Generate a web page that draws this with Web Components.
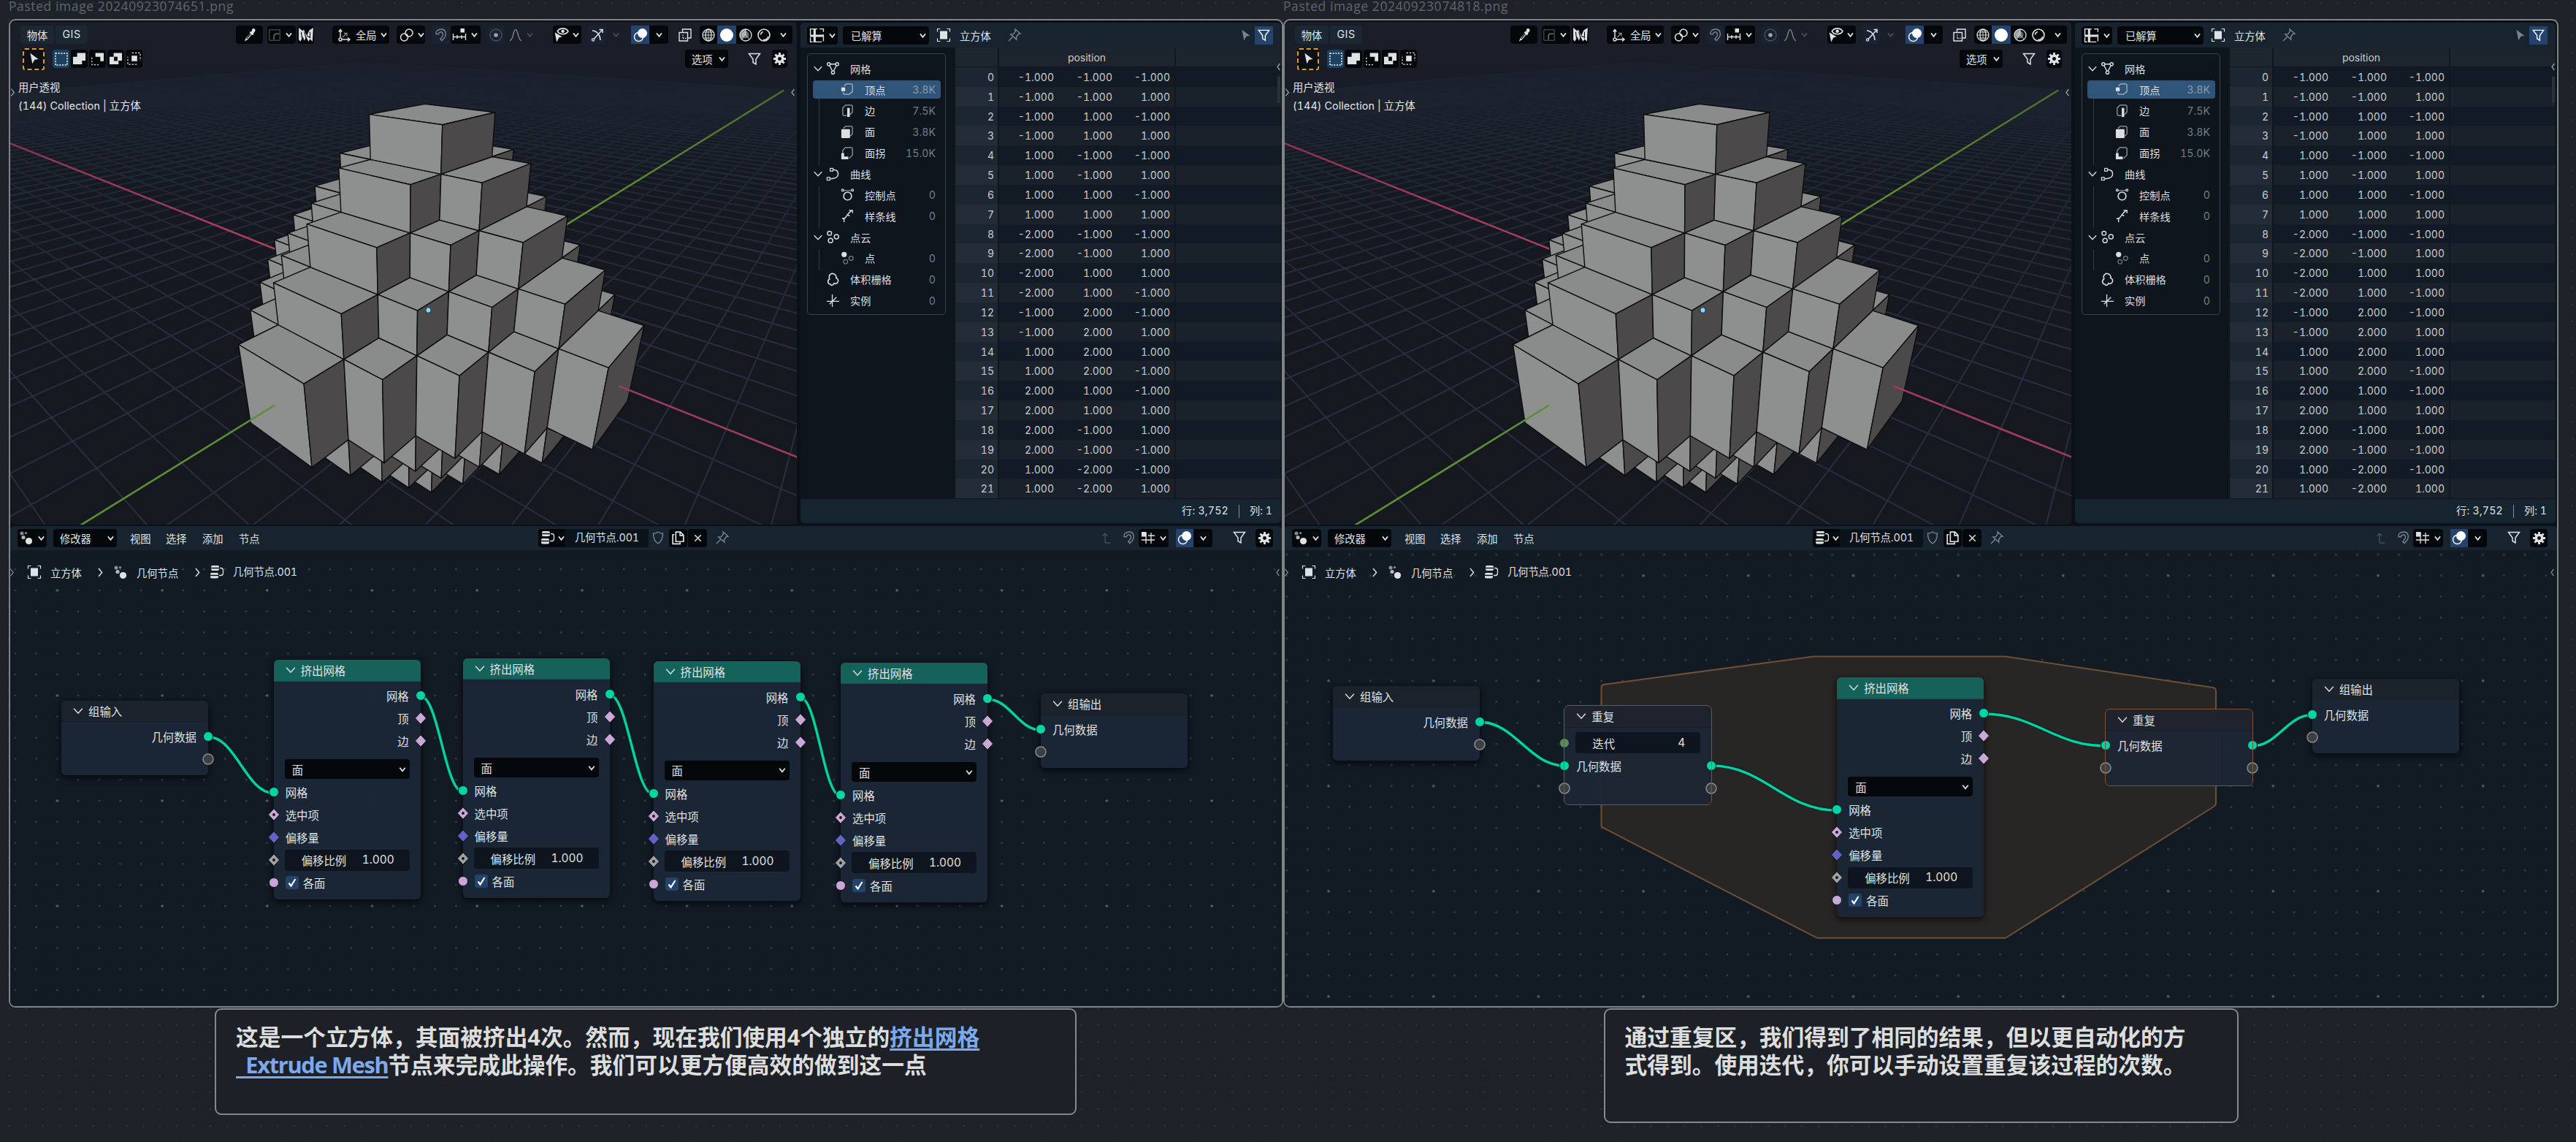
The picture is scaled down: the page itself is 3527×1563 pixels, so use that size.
<!DOCTYPE html>
<html lang="zh-CN">
<head>
<meta charset="utf-8">
<title>Canvas</title>
<style>
html,body{margin:0;padding:0}
body{width:3527px;height:1563px;overflow:hidden;background:#1e2227;font-family:Inter,"Noto Sans CJK SC",sans-serif;font-variant-numeric:tabular-nums}
</style>
</head>
<body>
<canvas-board></canvas-board>
<script>
const define = (name, render, after) => customElements.define(name, class extends HTMLElement {
  connectedCallback() {
    if (this.shadowRoot) return;
    const root = this.attachShadow({ mode: "open" });
    root.innerHTML = render(this);
    if (after) after(this, root);
  }
});
const at = (el, n, d = "") => el.getAttribute(n) ?? d;

/* ---------- text stretched to a given width through letter spacing ---------- */
define("fit-text", () => `<style>:host{display:inline-block;white-space:pre;line-height:1}span{display:inline-block}</style><span><slot></slot></span>`,
  (el, root) => {
    const s = root.querySelector("span"), w = +at(el, "w", 0);
    if (!w) return;
    const n = el.textContent.length, cur = s.getBoundingClientRect().width;
    el.style.letterSpacing = ((w - cur) / n).toFixed(3) + "px";
  });

/* ---------- icons, 20 x 20 ---------- */
const I = {
  chev: `<path d="M6.300 7.800l3.700 4.600L13.700 7.800" class="s" stroke-width="1.800"/>`,
  bigchev: `<path d="M3.500 6.500L10 13.500l6.500-7" class="s" stroke-width="1.600"/>`,
  right: `<path d="M7 3.500L12.500 10 7 16.500" class="s" stroke-width="1.700"/>`,
  left: `<path d="M12.500 4L8 10l4.500 6" class="s" stroke-width="1.700"/>`,
  dropper: `<path d="M13 2.500c2-2 5 .8 3.400 2.900l-2 2.500.6.8-1.500 1.500-1-.8-5.300 6.300-3.700 2 1.600-4 5.500-6-.8-.9 1.400-1.500 1 .6z" class="f"/><path d="M6 14.500l5-6" stroke="#05080b" stroke-width="1.200"/>`,
  orient: `<path d="M2 2h16v16H2z" class="s" stroke-width="1.100" opacity=".4"/><path d="M9 17v-5q0-4 4-4h4" class="s" stroke-width="1.800" opacity=".45"/>`,
  scribble: `<path d="M1 1l5 4 1-2 4 8 3-7 5-3-1 17-3-3-2 3-3-6-2 5-2-5-3 6-2-2z" class="f"/><path d="M4 6l1 8M8 6l2 8M15 6l0 8M11 11l4 2" stroke="#05080b" stroke-width="1" fill="none"/>`,
  axes: `<path d="M5 3v10M7 16h11M2.800 5.500L5 2.500l2.200 3M15 13.500l3 2.500-3 2.500" class="s" stroke-width="1.500"/><circle cx="5" cy="16" r="2" class="s" stroke-width="1.500"/><path d="M8 13l5-4.500M10 7.500h4v4" class="s" opacity=".6"/>`,
  pivot: `<circle cx="6.500" cy="13" r="5" class="s" stroke-width="1.500"/><circle cx="13" cy="7" r="5" class="s" stroke-width="1.500"/><circle cx="10" cy="10" r="1.500" class="f"/>`,
  magnet: `<path d="M3 8.500C2 1.500 13.500-.5 16 6c1.500 5-1.500 8.500-5 11.500l-2.200-2.200c2.700-2.500 4.500-5 3.500-7.500-1.200-3-6-2.500-5.800 1zM3 8.500l3.500.3" class="s" stroke-width="1.400"/>`,
  snap: `<path d="M1 12.500h18M1.500 8v9M7 10v5M13 10v5M18.500 8v9" class="s" stroke-width="1.400"/><rect x="11.500" y="1" width="5.500" height="5.500" class="f"/>`,
  snapgrid: `<path d="M7 3v15M14 3v15M1 13h18M10 7h9M1 7h4" class="s"/><rect x="1" y="2" width="6.500" height="6.500" class="f"/>`,
  prop: `<circle cx="10" cy="10" r="8" class="s" opacity=".5"/><circle cx="10" cy="10" r="2.800" fill="#9aa3ac"/>`,
  bell: `<path d="M2 17.500c5 0 4.500-15 8-15s3 15 8 15" class="s" stroke-width="1.400"/>`,
  eye: `<path d="M5 5.500c3-5 11-5 14 0-3 5-11 5-14 0z" class="s" stroke-width="1.500"/><circle cx="12" cy="5.500" r="2.200" class="f"/><path d="M1.500 7l9.500 5.500-4 1.200L4 19.500z" class="f"/>`,
  gizmo: `<path d="M3 4c6 0 11 6 11 13M5 15.500L17 2.500M12.500 2.500H17V7" class="s" stroke-width="1.500"/><circle cx="4" cy="16.500" r="1.600" class="s"/>`,
  overlay: `<circle cx="12.500" cy="7.500" r="6.500" class="f"/><circle cx="7.500" cy="12.500" r="6" class="o"/>`,
  xray: `<path d="M6.500 5.500V2h11.500v12h-4M2 6.500h11.500V18H2z" class="s" stroke-width="1.400"/><path d="M7 9.500v5M7 14.500h5" class="s" stroke-dasharray="1.500 1.500"/>`,
  wire: `<circle cx="10" cy="10" r="8" class="s"/><ellipse cx="10" cy="10" rx="4" ry="8" class="s"/><path d="M10 2v16M2 10h16M3.500 6h13M3.500 14h13" class="s" stroke-width=".9"/>`,
  solid: `<circle cx="10" cy="10" r="9" fill="#fff"/>`,
  mat: `<circle cx="10" cy="10" r="8" class="s"/><path d="M10 2a8 8 0 0 0-4.500 14.600L10 10z" class="f" opacity=".6"/><path d="M10 2v8l5.500 6" class="s" stroke-width="1"/><circle cx="9.500" cy="9.500" r="5" class="f" opacity=".45"/>`,
  rend: `<circle cx="10" cy="10" r="8" class="s" stroke-width="1.600"/><path d="M5.500 9.500a5 5 0 0 1 3.200-4M16 12a7 7 0 0 1-7 4.500" class="s" stroke-width="1.600"/>`,
  funnel: `<path d="M2.500 2.500h15l-5.500 7.500v7l-4-2.500V10z" class="s" stroke-width="1.500"/>`,
  gear: `<circle cx="10" cy="10" r="6.300" class="f"/><path d="M10 1v18M1 10h18M3.600 3.600l12.800 12.800M16.400 3.600L3.600 16.400" stroke="currentColor" stroke-width="3"/><circle cx="10" cy="10" r="2.600" fill="#05080b"/>`,
  tree: `<circle cx="4" cy="4" r="2.500" class="f" opacity=".6"/><circle cx="9.500" cy="3.500" r="1.600" class="f" opacity=".6"/><circle cx="6" cy="9.500" r="2.600" class="f" opacity=".8"/><circle cx="13.500" cy="14.500" r="4.600" class="f"/>`,
  group: `<rect x="2" y="1" width="11" height="7" rx="2" class="f"/><rect x="1" y="11" width="11" height="7.500" rx="2" class="f"/><path d="M2 4.500h11M1 14.500h11" stroke="#0a1016"/><path d="M14 4.500h1.500q3 0 3 3v4q0 3-3 3H13" class="s"/>`,
  obj: `<rect x="5" y="4.500" width="10" height="11" class="f"/><path d="M1.500 5.500v-4h4M14.500 1.500h4v4M18.500 14.500v4h-4M5.500 18.500h-4v-4" class="s" stroke-width="1.200"/>`,
  pin: `<path d="M11 2l7 6-2.500.5-3 4 .3 3.500-8-7 3.700-.4 3-4zM7.500 12.500L2 18" class="s" stroke-width="1.400"/>`,
  sheet: `<path d="M1.500 1.500h17v17h-17z" class="s" stroke-dasharray="9 3"/><path d="M7 1v18M1 10.500h17" class="s" stroke-width="3"/>`,
  cursor: `<path d="M4 1l13 9.500-6 1L7.500 18z" class="f"/>`,
  shield: `<path d="M10 2c2 1.500 4 2 6.500 2.200C16.500 11 15 15 10 18 5 15 3.500 11 3.500 4.200 6 4 8 3.500 10 2z" class="s" stroke-width="1.400"/>`,
  copy: `<path d="M7 2h6l4 4v8.500H7zM12.500 2v4.500H17M5 5.500H3v12h9.500v-2" class="s" stroke-width="1.600"/>`,
  x: `<path d="M5 5l10 10M15 5L5 15" class="s" stroke-width="1.700"/>`,
  up: `<path d="M9 17V4M5.500 8L9 4l3.500 4M9 17h7" class="s" stroke-width="1.400"/>`,
  mesh: `<path d="M4 4h12L10 15.500z" class="s" stroke-width="1.500"/><g class="k" stroke-width="1.500"><circle cx="4" cy="4" r="2.200"/><circle cx="16" cy="4" r="2.200"/><circle cx="10" cy="16" r="2.200"/></g>`,
  vert: `<path d="M4 14v1q0 2 2 2h6l5-4V4q0-2-2-2H8L5 5" class="s" opacity=".7"/><rect x="1" y="7" width="5.500" height="5.500" class="f"/>`,
  edge: `<path d="M9 17H5q-2 0-2-2V6l4-4h8q2 0 2 2v8l-4 4" class="s" opacity=".7"/><rect x="9.500" y="6" width="3.600" height="13" class="f"/>`,
  face: `<path d="M4 5l3-3h8q2 0 2 2v9l-3 3" class="s" opacity=".7"/><rect x="1" y="6" width="12.500" height="13" rx="1" class="f"/>`,
  corner: `<path d="M3 10V6l4-4h8q2 0 2 2v9l-4 4h-1" class="s" opacity=".7"/><path d="M1 10h4v5h6v4H1z" class="f"/>`,
  curve: `<path d="M10 3.500c6 0 7.500 3 7.500 6S15 16.500 6 16.500" class="s" stroke-width="1.600"/><rect x="6" y="1.500" width="4" height="4" class="k"/><rect x="1.500" y="14.500" width="4" height="4" class="k"/>`,
  cp: `<circle cx="10" cy="12" r="5.700" class="s" stroke-width="1.700"/><path d="M4 4h12" class="s" stroke-width=".8"/><circle cx="3" cy="3.500" r="1.500" class="s"/><circle cx="17" cy="3.500" r="1.500" class="s"/>`,
  spline: `<path d="M5 19c-1-7 1-5 3-8s2-4 8-9M12 2h5v4M2 14l5-1M9 8l4 2" class="s" stroke-width="1.500"/>`,
  cloud: `<circle cx="5" cy="4.500" r="3" class="s" stroke-width="1.500"/><circle cx="15" cy="9.500" r="3.200" class="s" stroke-width="1.500"/><circle cx="6.500" cy="15" r="3.200" class="s" stroke-width="1.500"/>`,
  pt: `<circle cx="5" cy="4.500" r="3.800" class="f"/><circle cx="15" cy="10" r="3" class="s" opacity=".5"/><circle cx="7" cy="15" r="3" class="s" opacity=".5"/>`,
  vol: `<path d="M5 9C3 4 7 1 10 1.500S15.500 5 14.500 8c3 1 4 4 2 6.500-1.500 2-4 2-5 1-1 3.500-5 3.500-5.500 1-3 .5-5-4-1-7.500z" class="s" stroke-width="1.700"/>`,
  inst: `<path d="M9 1v18M1 11h18M9 11l6-6M9 11l-4 4" class="s" stroke-width="1.400"/>`,
  s1: `<rect x="2" y="2" width="16" height="16" class="o" stroke-dasharray="2 1.700"/>`,
  s2: `<path d="M7 1.500h12v11h-5V18H1V7h6z" class="f"/>`,
  s3: `<path d="M7 1.500h12v12h-5V7H7z" class="f"/><path d="M2 8v10.500h9.500" class="s" stroke-dasharray="2.500 2"/>`,
  s4: `<path d="M7 1.500h12v11h-5V18H1V7h6z" class="f"/><rect x="7.500" y="7" width="5" height="6" fill="#05080b"/>`,
  s5: `<rect x="6.500" y="5.500" width="8" height="8" class="f"/><path d="M7 1.500h12v11M14 18H1V7" class="s" stroke-dasharray="2.500 2"/>`,
};
define("ui-icon", el => `<style>:host{display:inline-flex;flex:none;width:${at(el, "size", 20)}px;height:${at(el, "size", 20)}px}svg{width:100%;height:100%;overflow:visible}
.s{fill:none;stroke:currentColor}.o{fill:none;stroke:#fff;stroke-width:1.500}.k{fill:#0e151c;stroke:currentColor}.f{fill:currentColor}svg{stroke-width:1.300}</style><svg viewBox="0 0 20 20">${I[at(el, "name")]}</svg>`);

/* a strip of cells: [left, width, html, class] with left measured from the window's own left edge */
const strip = (x0, cells) => {
  let p = x0, out = "";
  for (const [x, w, html, c = ""] of cells) {
    out += `<div class="cell ${c}" style="margin-left:${(x - p).toFixed(1)}px;width:${w}px">${html}</div>`;
    p = x + w;
  }
  return out;
};
const ic = (n, s = 20) => `<ui-icon name="${n}" size="${s}"></ui-icon>`;
const stripCss = `.strip{display:flex;align-items:center;color:#dfe2e4;font-size:14.300px}
.cell{display:flex;flex:none;align-items:center;justify-content:center;height:25px;white-space:nowrap;box-sizing:border-box}
.b{background:#05080b;border-radius:4px}.bl{background:#05080b;border-radius:4px 0 0 4px}.br{background:#05080b;border-radius:0 4px 4px 0}.bm{background:#05080b}
.blue{background:#24436d;color:#fff}.t{justify-content:flex-start}.dim{color:#7c848b}.dimmer{color:#464f5a}.tab{background:#1b2833;border-radius:4px}.tab2{background:#1a2231;border-radius:4px}`;

/* ---------- perspective from known world/window point pairs ---------- */
const anchors = [
  [-1,1,5,581.5,142.3],[-1,-1,5,505.8,155.7],[1,1,5,677.6,153.3],[1,-1,5,606.1,171],[1,-1,4,604,238.7],
  [-1,-1,4,506.5,217.7],[1,-2,4,562.6,252.7],[-1,-2,4,464.4,230],[2,-1,4,660,250.3],[2,1,4,726.8,224.3],
  [1,-5,1,416,525.3],[-1,-5,1,327.6,473.3],[1,-5,-1,425.8,639.3],[-1,-5,-1,343.7,578.3],[2,-4,1,523.3,519.3],
  [3,-3,1,628.5,513.7],[4,-2,1,732.4,508.3],[5,-1,1,833.4,503.3],[5,1,1,880.4,446],[5,-1,-1,812.3,615],
  [3,-3,-1,623,626.7],[0,0,0,586.5,424.3],[5,0,0,849,529.3],[0,-5,0,375,555]
];
const solveCamera = pts => {
  const N = 11, A = Array.from({ length: N }, () => new Array(N + 1).fill(0));
  const add = (r, b) => { for (let i = 0; i < N; i++) { for (let j = 0; j < N; j++) A[i][j] += r[i] * r[j]; A[i][N] += r[i] * b; } };
  for (const [x, y, z, px, py] of pts) {
    const u = (px - 586) / 100, v = (py - 424) / 100;
    add([x, y, z, 1, 0, 0, 0, 0, -u * x, -u * y, -u * z], u);
    add([0, 0, 0, 0, x, y, z, 1, -v * x, -v * y, -v * z], v);
  }
  for (let i = 0; i < N; i++) {
    let p = i;
    for (let k = i; k < N; k++) if (Math.abs(A[k][i]) > Math.abs(A[p][i])) p = k;
    [A[i], A[p]] = [A[p], A[i]];
    for (let k = 0; k < N; k++) if (k !== i) {
      const f = A[k][i] / A[i][i];
      for (let j = i; j <= N; j++) A[k][j] -= f * A[i][j];
    }
  }
  return A.map((r, i) => r[N] / r[i]);
};
const M = solveCamera(anchors);
const depth = (x, y, z) => M[8] * x + M[9] * y + M[10] * z + 1;
const proj = (x, y, z) => {
  const w = depth(x, y, z);
  return [(586 + 100 * (M[0] * x + M[1] * y + M[2] * z + M[3]) / w).toFixed(1), (424 + 100 * (M[4] * x + M[5] * y + M[6] * z + M[7]) / w).toFixed(1)];
};
const seg = (a, b) => {
  const e = .04; let wa = depth(...a), wb = depth(...b);
  if (wa < e && wb < e) return "";
  const mix = t => a.map((v, i) => v + (b[i] - v) * t);
  if (wa < e) a = mix((e - wa) / (wb - wa)); else if (wb < e) b = mix((e - wa) / (wb - wa));
  return `M${proj(...a)}L${proj(...b)}`;
};
const scene = (() => {
  let near = "", far = "";
  for (let i = -60; i <= 60; i++) {
    const d = seg([i, -60, 0], [i, 60, 0]) + seg([-60, i, 0], [60, i, 0]);
    if (i % 10 === 0) far += d; else near += d;
  }
  const lo = i => i > 0 ? i : i < 0 ? i - 1 : -1, hi = i => i > 0 ? i + 1 : i < 0 ? i : 1;
  const inside = (i, j, k) => Math.abs(i) + Math.abs(j) + Math.abs(k) <= 4;
  let f = "";
  const quad = (c, p) => { f += `<polygon fill="${c}" points="${p.map(q => proj(...q).join()).join(" ")}"/>`; };
  for (let k = -4; k <= 4; k++) for (let i = -4; i <= 4; i++) for (let j = 4; j >= -4; j--) {
    if (!inside(i, j, k)) continue;
    const [x0, x1, y0, y1, z0, z1] = [lo(i), hi(i), lo(j), hi(j), lo(k), hi(k)];
    if (!inside(i, j, k + 1)) quad("#8a8c8c", [[x0, y0, z1], [x1, y0, z1], [x1, y1, z1], [x0, y1, z1]]);
    if (!inside(i, j - 1, k)) quad("#8e908f", [[x0, y0, z0], [x1, y0, z0], [x1, y0, z1], [x0, y0, z1]]);
    if (!inside(i + 1, j, k)) quad("#4b494a", [[x1, y0, z0], [x1, y1, z0], [x1, y1, z1], [x1, y0, z1]]);
  }
  return `<path d="${near}" fill="none" stroke="#252d3e" stroke-width="2.200"/><path d="${far}" fill="none" stroke="#2a3245" stroke-width="2.400"/>
  <rect x="14" y="28" width="1080" height="420" fill="url(#fog)"/>
  <path d="${seg([-60,0,0],[0,0,0])}" stroke="url(#rx)" stroke-width="2.400"/><path d="${seg([0,60,0],[0,0,0])}" stroke="url(#gy)" stroke-width="2.400"/>
  <g stroke="#0c0c0d" stroke-width="1.400" stroke-linejoin="round">${f}</g>
  <path d="${seg([5,0,0],[30,0,0])}" stroke="#a23a5c" stroke-width="2.600"/><path d="${seg([0,-5,0],[0,-30,0])}" stroke="#5c8f31" stroke-width="2.600"/>
  <ellipse cx="586.5" cy="424.5" rx="3.600" ry="3.800" fill="#8fd4fb" stroke="#16364c"/>`;
})();

define("view-3d", () => `<style>
:host{display:grid;width:1077px;height:688px;background:#15181f;border-radius:5px;overflow:hidden;color:#e3e5e7}
:host>*{grid-area:1/1}${stripCss}
.ui{display:flex;flex-direction:column;align-items:stretch}
.bar1{height:35px}.bar2{height:31px}
.txt{display:flex;flex-direction:column;gap:9px;padding:16px 0 0 11px;font-size:14.300px;line-height:16px;height:41px}.txt fit-text{line-height:16px}
.ends{display:flex;justify-content:space-between;height:20px;margin:-34px -2px 0 -4px;color:#9aa0a5}
.tool{border:2px dashed #e19a2c;border-radius:3px;height:30px;background:#0c0f13}.on{background:#1d4161}
</style>
<svg width="1077" height="688" viewBox="14 30 1077 688"><defs>
<linearGradient id="fog" x1="0" y1="0" x2="0" y2="1"><stop offset="0" stop-color="#191e29"/><stop offset=".15" stop-color="#191e29" stop-opacity=".9"/><stop offset=".5" stop-color="#171b24" stop-opacity=".4"/><stop offset="1" stop-color="#15181f" stop-opacity="0"/></linearGradient>
<linearGradient id="rx" gradientUnits="userSpaceOnUse" x1="14" y1="0" x2="400" y2="0"><stop offset="0" stop-color="#8f3553"/><stop offset="1" stop-color="#b23e63"/></linearGradient>
<linearGradient id="gy" gradientUnits="userSpaceOnUse" x1="777" y1="0" x2="1091" y2="0"><stop offset="0" stop-color="#64972e"/><stop offset="1" stop-color="#4d6c2c"/></linearGradient></defs>${scene}</svg>
<div class="ui"><div class="strip bar1">${strip(14, [
  [28, 46, "物体", "tab"], [76, 44, `<fit-text w="25">GIS</fit-text>`, "tab"],
  [323, 37, ic("dropper", 22), "b"], [366, 20, ic("orient", 18), "bl"], [386, 19, ic("chev", 19), "br"], [407, 23, ic("scribble", 22), "b"],
  [455, 32, ic("axes"), "bl"], [487, 30, "全局", "bm t"], [517, 16, ic("chev", 19), "br"],
  [543, 27, ic("pivot"), "bl"], [570, 12, ic("chev", 19), "br"],
  [591, 25, ic("magnet"), "tab2 dim"], [617, 24, ic("snap"), "bl"], [641, 17, ic("chev", 19), "br"],
  [667, 24, ic("prop"), "tab2 dim"], [694, 24, ic("bell"), "dim"], [718, 15, ic("chev", 19), "dimmer"],
  [757, 23, ic("eye", 21), "bl"], [780, 16, ic("chev", 19), "br"],
  [805, 25, ic("gizmo"), "tab2"], [834, 18, ic("chev", 19), "dimmer"],
  [864, 25, ic("overlay"), "blue"], [889, 26, ic("chev", 19), "br"],
  [926, 23, ic("xray"), ""], [958, 24, ic("wire"), "bl"], [982, 26, ic("solid"), "bm blue"], [1008, 25, ic("mat"), "bm"], [1033, 26, ic("rend"), "bm"], [1059, 26, ic("chev", 19), "br"]
])}</div><div class="strip bar2">${strip(14, [
  [31, 30, ic("cursor", 17), "tool"], [72, 23, ic("s1"), "b on"], [97, 23, ic("s2", 19), "b"], [122, 23, ic("s3", 19), "b"], [147, 23, ic("s4", 19), "b"], [172, 23, ic("s5", 19), "b"],
  [938, 9, "", "bl"], [947, 33, "选项", "bm t"], [980, 17, ic("chev", 19), "br"], [1022, 22, ic("funnel"), ""], [1057, 21, ic("gear", 19), "b"]
])}</div>
<div class="txt"><span>用户透视</span><fit-text w="168">(144) Collection | 立方体</fit-text></div>
<div class="ends">${ic("right", 15)}${ic("left", 15)}</div></div>`);

/* ---------- spreadsheet ---------- */
const rows = `-1 -1 -1|-1 -1 1|-1 1 -1|-1 1 1|1 -1 -1|1 -1 1|1 1 -1|1 1 1|-2 -1 -1|-2 -1 1|-2 1 1|-2 1 -1|-1 2 -1|-1 2 1|1 2 1|1 2 -1|2 1 -1|2 1 1|2 -1 1|2 -1 -1|1 -2 -1|1 -2 1`.split("|").map(r => r.split(" ").map(v => (+v).toFixed(3)));
define("tree-row", el => { const lvl = +at(el, "level", 0); return `<style>
:host{display:flex;align-items:center;height:24.500px;margin:0 6px 4.370px;border-radius:4px;font-size:14.200px;color:#dcdfe1;padding:0 7px 0 0}
:host([on]){background:#30557a}
i{flex:none;width:${lvl ? 38 : 19}px;display:flex;box-sizing:border-box}b{flex:none;width:33px;display:flex}u{flex:1;text-decoration:none;white-space:nowrap}em{font-style:normal;color:#757d84}
:host([on]) em{color:#8a98a8}</style><i>${el.hasAttribute("open") ? ic("bigchev", 16) : ""}</i><b>${ic(at(el, "icon"), 19)}</b><u><slot></slot></u><em>${at(el, "count")}</em>`; });
define("sheet-view", () => `<style>
:host{display:flex;flex-direction:column;position:relative;width:658px;height:685px;background:#0e151c;border-radius:5px;overflow:hidden;color:#dfe2e4;font-size:14.200px}${stripCss}
.strip{height:34px;background:#17242f;flex:none}.main{display:flex;height:618px}
.side{width:212px;box-sizing:border-box;padding:8px 0 0 9px}
.box{width:190px;height:358px;border:1px solid #3b4248;border-radius:5px;padding-top:7.500px;box-sizing:border-box}
.kids{display:flex;flex-direction:column;border-left:1px solid #353b41;margin-left:15px}.kids tree-row{margin-left:-9px}
.grid{flex:1;display:flex;flex-direction:column;overflow:hidden}
.r{display:flex;height:26.840px;flex:none;line-height:27px;font-size:14px;background:#121b25;color:#c9cccf}
.r:nth-child(even){background:#1a212b}.r div{text-align:right}
.i{width:53px;padding-right:5px;background:#1c2630;border-right:2px solid #0e161e}.r:nth-child(even) .i{background:#232c36}
.a{width:75px}.c{width:80px}.d{width:79px;padding-right:6px;border-right:2px solid #0f1820}
.h{height:27px;background:#1d242e;color:#c9cccf;align-items:center;border-bottom:1px solid #0f161d;box-sizing:border-box}.h .i{background:#1d262f;height:26px}.h div.p{width:240px;height:27px;text-align:center;border-right:2px solid #0f1820}
.foot{height:33px;background:#16242f;display:flex;align-items:center;justify-content:flex-end;gap:14px;padding-right:12px;font-size:14.200px}
.foot i{width:1px;height:18px;background:#8a9298}
.scroll{position:absolute;right:1px;top:73px;width:4px;height:37px;border-radius:2px;background:#29313a}.fold{position:absolute;right:-4px;top:53px;color:#9aa0a5}
</style>
<div class="strip">${strip(1096, [[1105, 26, ic("sheet", 21), "bl"], [1131, 16, ic("chev", 19), "br"], [1154, 11, "", "bl"], [1165, 89, "已解算", "bm t"], [1254, 18, ic("chev", 19), "br"], [1282, 20, ic("obj"), ""], [1314, 44, "立方体", "t"], [1379, 20, ic("pin"), "dim"], [1696, 18, ic("cursor", 17), "dim"], [1718, 25, ic("funnel", 19), "blue"]])}</div>
<div class="main"><div class="side"><div class="box">
<tree-row icon="mesh" open>网格</tree-row><div class="kids"><tree-row level="1" icon="vert" count="3.8K" on>顶点</tree-row><tree-row level="1" icon="edge" count="7.5K">边</tree-row><tree-row level="1" icon="face" count="3.8K">面</tree-row><tree-row level="1" icon="corner" count="15.0K">面拐</tree-row></div>
<tree-row icon="curve" open>曲线</tree-row><div class="kids"><tree-row level="1" icon="cp" count="0">控制点</tree-row><tree-row level="1" icon="spline" count="0">样条线</tree-row></div>
<tree-row icon="cloud" open>点云</tree-row><div class="kids"><tree-row level="1" icon="pt" count="0">点</tree-row></div>
<tree-row icon="vol" count="0">体积栅格</tree-row><tree-row icon="inst" count="0">实例</tree-row></div></div>
<div class="grid"><div class="r h"><div class="i"></div><div class="p"><fit-text w="52">position</fit-text></div></div><div>${rows.map((r, i) => `<div class="r"><div class="i">${i}</div><div class="a">${r[0]}</div><div class="c">${r[1]}</div><div class="d">${r[2]}</div></div>`).join("")}</div></div></div>
<div class="foot"><fit-text w="64">行: 3,752</fit-text><i></i><fit-text w="31">列: 1</fit-text></div>
<div class="scroll"></div><div class="fold">${ic("left", 15)}</div>`);

/* ---------- node editor ---------- */
const sockets = {
  geo: `<circle cx="9" cy="9" r="6.500" fill="#00d6a3" stroke="#0b1a20" stroke-width="1"/>`,
  int: `<circle cx="9" cy="9" r="6.500" fill="#598c5c" stroke="#0b1a20" stroke-width="1"/>`,
  bool: `<circle cx="9" cy="9" r="6.500" fill="#cca6d6" stroke="#0b1a20" stroke-width="1"/>`,
  ext: `<circle cx="9" cy="9" r="7" fill="#3d3f41" stroke="#8b8d8e" stroke-width="1.500"/>`,
  bd: `<path d="M9 .8L16.600 9 9 17.200 1.400 9z" fill="#cca6d6" stroke="#0b1a20"/>`,
  bf: `<path d="M9 .8L16.600 9 9 17.200 1.400 9z" fill="#cca6d6" stroke="#0b1a20"/><circle cx="9" cy="9" r="1.900" fill="#111"/>`,
  vec: `<path d="M9 .8L16.600 9 9 17.200 1.400 9z" fill="#6363c7" stroke="#0b1a20"/>`,
  flt: `<path d="M9 .8L16.600 9 9 17.200 1.400 9z" fill="#a1a1a1" stroke="#0b1a20"/><circle cx="9" cy="9" r="1.900" fill="#111"/>`,
};
define("node-row", el => { const l = at(el, "in"), r = at(el, "out"); return `<style>
:host{display:flex;align-items:center;height:31.050px;font-size:15.400px;color:#dfe2e4;white-space:nowrap}
svg{flex:none;width:18px;height:18px;overflow:visible}.l{margin:0 7px 0 -9px}.r{margin:0 -9px 0 7px}.l0{width:16px}.r0{width:16px}
div{flex:1;display:flex;align-items:center;${r && !l ? "justify-content:flex-end" : ""}}</style>
${l ? `<svg class="l">${sockets[l]}</svg>` : `<span class="l0"></span>`}<div><slot></slot></div>${r ? `<svg class="r">${sockets[r]}</svg>` : `<span class="r0"></span>`}`; });
const field = `display:flex;align-items:center;flex:1;box-sizing:border-box;`;
const kinds = {
  extrude: `<node-row out="geo">网格</node-row><node-row out="bd">顶</node-row><node-row out="bd">边</node-row><p></p>
  <node-row><span class="drop">面${ic("chev", 20)}</span></node-row><node-row in="geo">网格</node-row><node-row in="bf">选中项</node-row><node-row in="vec">偏移量</node-row>
  <node-row in="flt"><span class="num">偏移比例<fit-text w="44">1.000</fit-text></span></node-row><node-row in="bool"><span class="chk"><svg width="18" height="18" viewBox="0 0 18 18"><path d="M4.500 9.500l3 4 6-9.500" fill="none" stroke="#fff" stroke-width="2.200"/></svg></span>各面</node-row>`,
  input: `<node-row out="geo">几何数据</node-row><node-row out="ext"></node-row>`,
  output: `<node-row in="geo">几何数据</node-row><node-row in="ext"></node-row>`,
  repeat: `<node-row in="int"><span class="num">迭代<span>4</span></span></node-row><node-row in="geo" out="geo">几何数据</node-row><node-row in="ext" out="ext"></node-row>`,
  repeatend: `<node-row in="geo" out="geo">几何数据</node-row><node-row in="ext" out="ext"></node-row>`,
};
define("geo-node", el => { const k = at(el, "kind"), rep = k.startsWith("repeat"); return `<style>
:host{display:block;position:absolute;left:${at(el, "x")}px;top:${at(el, "y")}px;width:201px;height:${at(el, "h")}px;background:${rep ? "#1d2635f2" : "#1b2636f7"};border-radius:6px;box-shadow:0 3px 9px 1px #0009;box-sizing:border-box;${rep ? "outline:1.500px solid #7a5638;outline-offset:0;box-shadow:none" : ""}}
header{display:flex;align-items:center;height:29.500px;box-sizing:border-box;padding-left:14px;gap:5px;border-radius:6px 6px 0 0;font-size:15.400px;color:#dfe2e4;background:${k === "extrude" ? "#15625b" : rep ? "#1f232d" : "#1c222c"};border-bottom:1px solid ${k === "extrude" ? "#1a4f50" : "#181e28"}}
section{padding-top:${k === "repeat" ? 5.5 : 4.3}px}p{margin:0;height:7.500px}
.drop{${field}height:27px;background:#04080b;border-radius:4px;justify-content:space-between;padding-left:10px;margin-left:-1px;margin-right:-1px}
.num{${field}height:29px;background:#0f151f;border-radius:4px;padding:0 21px 0 23px;justify-content:space-between;margin-left:-1px;margin-right:-1px}
.chk{display:flex;width:18px;height:18px;background:#23436b;border-radius:3px;margin-right:6px}
</style><header>${ic("bigchev", 18)}<slot></slot></header><section>${kinds[k]}</section>`; });

const graphs = {
  chain: {
    dots: [78.4, 808], nodes: [["input", 84, 959, 102, "组输入"], ["extrude", 374.7, 903.5, 328, "挤出网格"], ["extrude", 633.5, 901.3, 328, "挤出网格"], ["extrude", 894.5, 905, 328, "挤出网格"], ["extrude", 1151, 907.3, 328, "挤出网格"], ["output", 1425, 949.5, 102, "组输出"]],
    wires: [[285, 1008.5, 374.7, 1085.5], [576, 953, 633.5, 1083.3], [834.5, 951, 894.5, 1087], [1095.5, 954.5, 1151, 1089.3], [1352, 957, 1425, 999]], zone: ""
  },
  repeat: {
    dots: [74, 787.8], nodes: [["input", 80, 939, 102, "组输入"], ["repeat", 397.3, 966.5, 135, "重复"], ["extrude", 770.2, 927.5, 328, "挤出网格"], ["repeatend", 1138, 971, 104, "重复"], ["output", 1420.7, 929, 102, "组输出"]],
    wires: [[281, 988.3, 397.3, 1048], [598.3, 1048, 770.2, 1109.3], [971.2, 977, 1138, 1021], [1339, 1021, 1420.7, 978.5]],
    zone: `<path d="M447.500 941q0-3.500 3-4L738 898.500H1001L1285 941q4 1 4 5V1099q0 3-3 5L1001 1283.800H743L450 1133q-2.500-1.500-2.500-4z" fill="#282624" stroke="#6f4f35" stroke-width="2"/>`
  }
};
const wire = ([a, b, c, d]) => { const h = (c - a) * .42; return `<path d="M${a} ${b}C${a + h} ${b} ${c - h} ${d} ${c} ${d}"/>`; };
define("node-canvas", el => { const g = graphs[at(el, "graph")], [dx, dy] = g.dots; return `<style>
:host{display:block;position:relative;height:624px;background:#121a24;overflow:hidden;color:#dfe2e4}
.free{position:absolute;left:-14px;top:-753px;width:1760px;height:1380px}svg{position:absolute;left:0;top:0}
.crumb{position:relative;z-index:2;margin-top:18px}${stripCss}
</style><div class="free"><svg width="1760" height="1380"><defs>
<pattern id="d" patternUnits="userSpaceOnUse" width="28.740" height="28.800" x="${dx - 14}" y="${dy - 14}"><circle cx="14" cy="14" r="1.400" fill="#373f47"/></pattern>
<pattern id="e" patternUnits="userSpaceOnUse" width="143.700" height="144" x="${dx - 14}" y="${dy - 14}"><circle cx="14" cy="14" r="1.800" fill="#555d65"/></pattern></defs>
<rect width="1760" height="1380" fill="url(#d)"/><rect width="1760" height="1380" fill="url(#e)"/>${g.zone}
<g fill="none" stroke="#0a1f22" stroke-width="5.500">${g.wires.map(wire).join("")}</g><g fill="none" stroke="#00d2a0" stroke-width="3.500">${g.wires.map(wire).join("")}</g></svg>
${g.nodes.map(([k, x, y, h, t]) => `<geo-node kind="${k}" x="${x}" y="${y}" h="${h}">${t}</geo-node>`).join("")}</div>
<div class="strip crumb">${strip(14, [[10, 12, ic("right", 15), "dim"], [37, 19, ic("obj", 20), ""], [69, 44, "立方体", "t"], [128, 18, ic("right", 17), ""], [155, 19, ic("tree"), ""], [187, 58, "几何节点", "t"], [261, 18, ic("right", 17), ""], [287, 20, ic("group"), ""], [319, 90, `<fit-text w="88">几何节点.001</fit-text>`, "t"], [1743, 12, ic("left", 15), "dim"]])}</div>`; });

define("node-editor", el => `<style>:host{display:flex;flex-direction:column;flex:1}${stripCss}.bar{height:32.500px;background:#17242f;border-radius:5px 5px 0 0}.name{background:#0b131a}</style>
<div class="strip bar">${strip(14, [
  [24, 24, ic("tree"), "bl"], [48, 16, ic("chev", 19), "br"], [73, 9, "", "bl"], [82, 61, "修改器", "bm t"], [143, 17, ic("chev", 19), "br"],
  [178, 30, "视图", "t"], [227, 30, "选择", "t"], [277, 30, "添加", "t"], [327, 30, "节点", "t"],
  [737, 26, ic("group"), "bl"], [763, 11, ic("chev", 19), "bm"], [774, 114, `<fit-text w="88">几何节点.001</fit-text>`, "name"], [891, 20, ic("shield"), "dim"], [916, 25, ic("copy", 21), "b"], [942, 26, ic("x", 17), "b"], [979, 20, ic("pin"), "dim"],
  [1504, 20, ic("up"), "dimmer"], [1536, 20, ic("magnet"), "dim"], [1559, 26, ic("snapgrid"), "bl"], [1585, 15, ic("chev", 19), "br"], [1610, 24, ic("overlay"), "blue"], [1634, 26, ic("chev", 19), "br"], [1687, 20, ic("funnel"), ""], [1719, 24, ic("gear", 19), "b"]
])}</div><node-canvas graph="${at(el, "graph")}"></node-canvas>`);

define("blender-shot", el => `<style>
:host{display:flex;flex-direction:column;flex:none;width:${at(el, "w")}px;height:1353px;box-sizing:border-box;border:2px solid #7f8487;border-radius:9px;overflow:hidden;background:#0b1117}
.top{display:flex;gap:5px;height:692px;padding-top:2px;box-sizing:border-box;flex:none}sheet-view{margin-top:1px}
footer{height:4px;background:#22282e;flex:none}</style>
<div class="top"><view-3d></view-3d><sheet-view></sheet-view></div><node-editor graph="${at(el, "graph")}"></node-editor><footer></footer>`);

define("note-card", el => `<style>:host{display:block;flex:none;width:${at(el, "w")}px;height:${at(el, "h")}px;box-sizing:border-box;border:2px solid #85898b;border-radius:9px;background:#1d2127;padding:18px 0 0 27px;
font:bold 30.730px/38.200px "Open Sans","Noto Sans CJK SC",sans-serif;color:#dcdddd;white-space:nowrap}
::slotted(*){display:block}</style><slot></slot>`);

define("canvas-board", () => `<style>
:host{display:flex;flex-direction:column;width:3527px;height:1563px;background:radial-gradient(circle at 12px 12px,#2d3338 1.200px,transparent 1.700px) .7px -8px/22.940px 22.940px #1e2228}
.names{display:flex;height:26px;padding-left:12px;color:#5d6672;font:17.500px/17px "Open Sans",sans-serif;flex:none}.names div{width:1745px}
.shots{display:flex;padding-left:12px;flex:none}.notes{display:flex;padding-left:294px;gap:721.500px;align-items:flex-start;margin-top:1px}
a{color:#7ba9ec;text-decoration:underline;text-decoration-thickness:3px;text-underline-offset:4px}
.en{letter-spacing:-1.300px}
</style>
<div class="names"><div><fit-text w="308">Pasted image 20240923074651.png</fit-text></div><div><fit-text w="308">Pasted image 20240923074818.png</fit-text></div></div>
<div class="shots"><blender-shot w="1745" graph="chain"></blender-shot><blender-shot w="1746" graph="repeat"></blender-shot></div>
<div class="notes"><note-card w="1180" h="146"><div>这是一个立方体，其面被挤出4次。然而，现在我们使用4个独立的<a>挤出网格</a></div><div><a class="en">&nbsp;&nbsp;Extrude Mesh</a>节点来完成此操作。我们可以更方便高效的做到这一点</div></note-card>
<note-card w="869" h="157"><div>通过重复区，我们得到了相同的结果，但以更自动化的方</div><div>式得到。使用迭代，你可以手动设置重复该过程的次数。</div></note-card></div>`);
</script>
</body>
</html>
